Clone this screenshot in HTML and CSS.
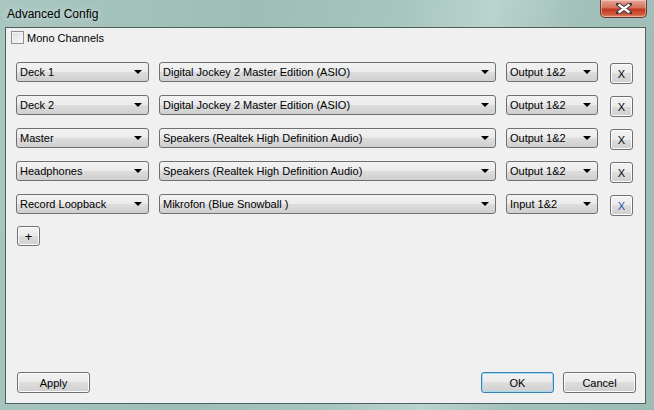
FILE: index.html
```html
<!DOCTYPE html>
<html>

<head>
    <link rel="stylesheet" href="styles.css">
</head>

<body>
    <div class="window">
        <div class="titlebar">
            <span class="title">Advanced Config</span>
            <div class="close-btn">
                <svg width="16" height="11" viewBox="0 0 16 11">
                    <path d="M2 1 L14 10 M14 1 L2 10" stroke="#3a3a3a" stroke-width="4.2" stroke-linecap="square" />
                    <path d="M2.5 1.5 L13.5 9.5 M13.5 1.5 L2.5 9.5" stroke="#ffffff" stroke-width="2.2" />
                </svg>
            </div>
        </div>

        <div class="client">
            <label class="mono">
                <span class="checkbox"></span>
                Mono Channels
            </label>

            <div class="rows">
                <div class="row">
                    <div class="combo combo-name">Deck 1<span class="arrow"></span></div>
                    <div class="combo combo-device">Digital Jockey 2 Master Edition (ASIO)<span class="arrow"></span></div>
                    <div class="combo combo-channel">Output 1&amp;2<span class="arrow"></span></div>
                    <button class="btn btn-x">X</button>
                </div>
                <div class="row">
                    <div class="combo combo-name">Deck 2<span class="arrow"></span></div>
                    <div class="combo combo-device">Digital Jockey 2 Master Edition (ASIO)<span class="arrow"></span></div>
                    <div class="combo combo-channel">Output 1&amp;2<span class="arrow"></span></div>
                    <button class="btn btn-x">X</button>
                </div>
                <div class="row">
                    <div class="combo combo-name">Master<span class="arrow"></span></div>
                    <div class="combo combo-device">Speakers (Realtek High Definition Audio)<span class="arrow"></span></div>
                    <div class="combo combo-channel">Output 1&amp;2<span class="arrow"></span></div>
                    <button class="btn btn-x">X</button>
                </div>
                <div class="row">
                    <div class="combo combo-name">Headphones<span class="arrow"></span></div>
                    <div class="combo combo-device">Speakers (Realtek High Definition Audio)<span class="arrow"></span></div>
                    <div class="combo combo-channel">Output 1&amp;2<span class="arrow"></span></div>
                    <button class="btn btn-x">X</button>
                </div>
                <div class="row">
                    <div class="combo combo-name">Record Loopback<span class="arrow"></span></div>
                    <div class="combo combo-device">Mikrofon (Blue Snowball )<span class="arrow"></span></div>
                    <div class="combo combo-channel">Input 1&amp;2<span class="arrow"></span></div>
                    <button class="btn btn-x btn-x-hot">X</button>
                </div>
            </div>

            <button class="btn btn-add">+</button>

            <div class="footer">
                <button class="btn btn-wide">Apply</button>
                <div class="footer-right">
                    <button class="btn btn-wide btn-default">OK</button>
                    <button class="btn btn-wide">Cancel</button>
                </div>
            </div>
        </div>
    </div>
</body>

</html>
```

FILE: styles.css
```css
* {
    margin: 0;
    box-sizing: border-box;
}

html,
body {
    height: 100%;
}

body {
    background: #a3c2bb;
    font-family: "Liberation Sans", Arial, sans-serif;
    font-size: 11px;
    color: #000;
    overflow: hidden;
}

/* window frame */
.window {
    display: flex;
    flex-direction: column;
    height: 410px;
    width: 654px;
    padding: 0 8px 6px 5px;
    background: linear-gradient(100deg, #a9c7c0 0%, #9dbdb6 35%, #a6c5bf 55%, #b9d3ce 68%, #a2c1ba 80%, #9cbcb5 100%);
}

.titlebar {
    display: flex;
    align-items: flex-start;
    height: 27px;
    flex: none;
}

.title {
    padding: 7px 0 0 2px;
    font-size: 12px;
    color: #000;
    text-shadow: 0 0 6px rgba(255, 255, 255, 0.7);
}

.close-btn {
    display: flex;
    align-items: center;
    justify-content: center;
    margin-left: auto;
    margin-right: -1px;
    width: 47px;
    height: 18px;
    border: 1px solid #6b3a32;
    border-top: none;
    border-radius: 0 0 5px 5px;
    background: linear-gradient(#e9a698 0%, #d4715e 45%, #c1391f 55%, #cf5a3d 85%, #e28e6f 100%);
    box-shadow: inset 0 0 0 1px rgba(255, 255, 255, 0.35);
}

.close-btn svg {
    display: block;
}

/* client area */
.client {
    display: flex;
    flex-direction: column;
    flex: 1;
    background: #f0f0f0;
    border: 1px solid #4f5f5c;
    padding: 2px 0 0 5px;
}

.mono {
    display: flex;
    align-items: center;
    gap: 3px;
    height: 15px;
}

.checkbox {
    width: 13px;
    height: 13px;
    border: 1px solid #8e8f8f;
    background: linear-gradient(135deg, #dcdcdc, #fbfbfb);
    box-shadow: inset 0 0 0 1px #f4f4f4;
}

.rows {
    display: flex;
    flex-direction: column;
    gap: 13px;
    margin-top: 17px;
    padding-left: 5px;
}

.row {
    display: flex;
    align-items: center;
    height: 20px;
}

.combo {
    position: relative;
    display: flex;
    align-items: center;
    height: 20px;
    padding-left: 3px;
    border: 1px solid #707070;
    border-radius: 3px;
    background: linear-gradient(#f2f2f2 0%, #ebebeb 50%, #dddddd 50%, #cfcfcf 100%);
    white-space: nowrap;
}

.arrow {
    position: absolute;
    right: 6px;
    top: 7px;
    border-left: 4px solid transparent;
    border-right: 4px solid transparent;
    border-top: 4px solid #000;
}

.combo-name {
    width: 133px;
}

.combo-device {
    width: 337px;
    margin-left: 10px;
}

.combo-channel {
    width: 92px;
    margin-left: 10px;
}

.btn {
    display: flex;
    align-items: center;
    justify-content: center;
    border: 1px solid #707070;
    border-radius: 3px;
    background: linear-gradient(#f2f2f2 0%, #ebebeb 50%, #dddddd 50%, #cfcfcf 100%);
    box-shadow: inset 0 0 0 1px #fcfcfc;
    font-family: "Liberation Sans", Arial, sans-serif;
    font-size: 11px;
    color: #000;
    padding: 0;
}

.btn-x {
    width: 23px;
    height: 21px;
    margin-left: 12px;
    margin-top: 3px;
}

.btn-x-hot {
    color: #1b4fa8;
}

.btn-add {
    width: 23px;
    height: 20px;
    margin: 12px 0 0 6px;
    font-size: 13px;
}

.footer {
    display: flex;
    align-items: center;
    margin-top: auto;
    padding: 0 9px 10px 6px;
}

.footer-right {
    display: flex;
    gap: 9px;
    margin-left: auto;
}

.btn-wide {
    width: 73px;
    height: 21px;
}

.btn-default {
    border-color: #3c7fb1;
    box-shadow: inset 0 0 0 1px #9fdcf4;
}
```
